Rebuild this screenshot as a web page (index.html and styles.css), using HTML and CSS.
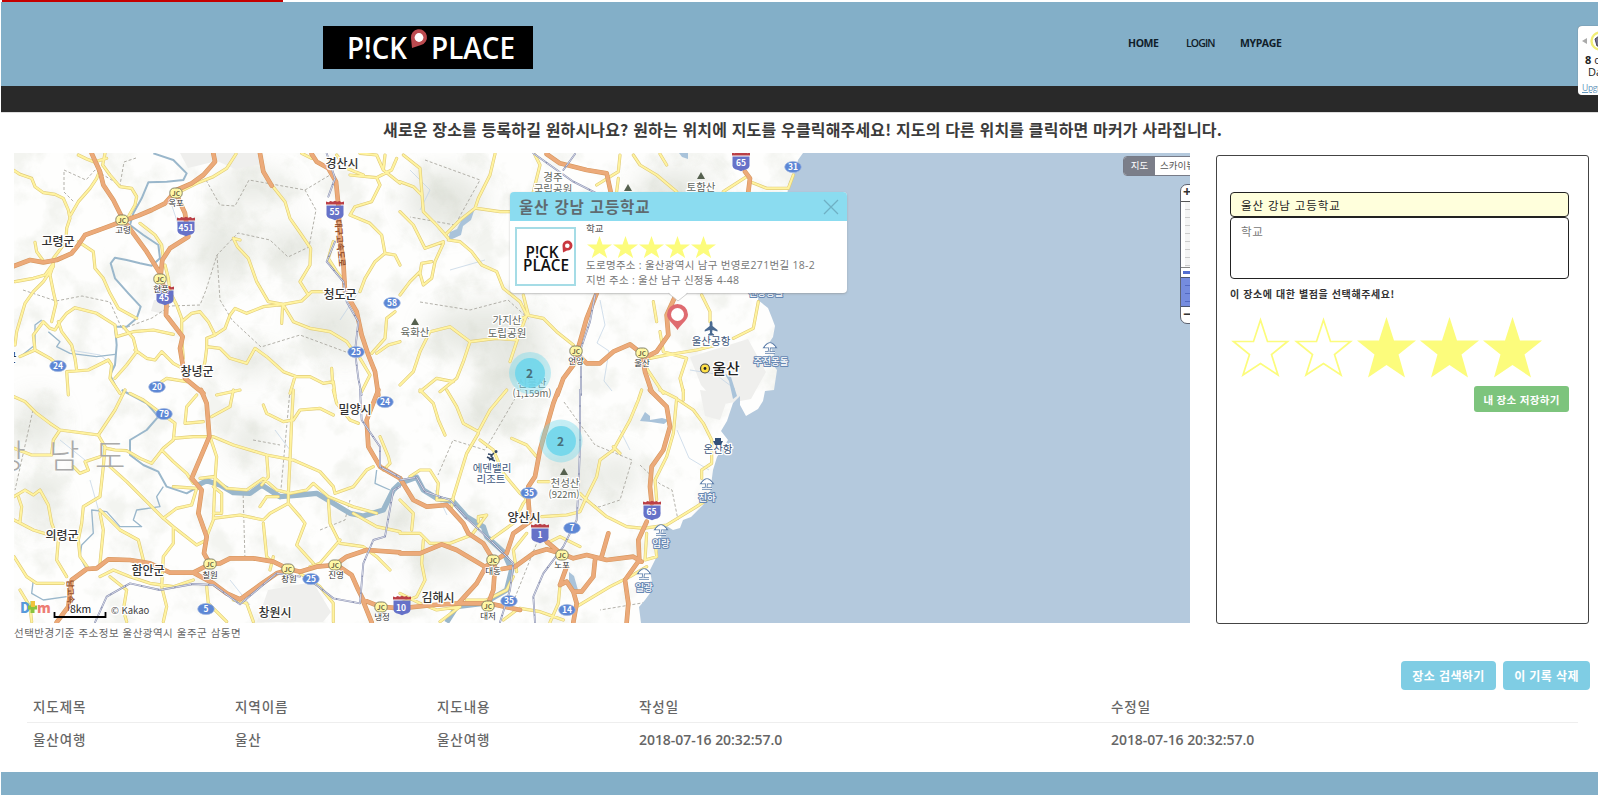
FILE: index.html
```html
<!DOCTYPE html>
<html lang="ko">
<head>
<meta charset="utf-8">
<title>PICK PLACE</title>
<link rel="stylesheet" href="styles.css">
</head>
<body>
<div class="progress"></div>
<header class="header">
  <svg class="logo" viewBox="0 0 210 43">
    <rect width="210" height="43" fill="#000"/>
    <text x="24" y="32.5" textLength="60" lengthAdjust="spacingAndGlyphs">P!CK</text>
    <text x="108" y="32.5" textLength="84" lengthAdjust="spacingAndGlyphs">PLACE</text>
    <path d="M89 22 L88 12 A8 8 0 1 1 98 19 Z" fill="#bb4a4f"/>
    <circle cx="96" cy="11.5" r="4.4" fill="#fff"/>
  </svg>
  <nav class="nav"><a>HOME</a><a class="nav-login">LOGIN</a><a>MYPAGE</a></nav>
</header>
<div class="subbar"></div>
<aside class="widget">
  <div class="widget-top"><span class="widget-arrow"></span><svg class="widget-icon" width="24" height="20" viewBox="0 0 24 20"><circle cx="10" cy="10" r="8.500" fill="#fff" stroke="#f1ee76" stroke-width="2.4"/><path d="M5 8l4-3v7l3 3H7z" fill="#77758f" stroke="#45435b"/></svg></div>
  <div class="widget-count"><b>8</b> online</div>
  <div class="widget-day">Day</div>
  <a class="widget-link">Upgrade</a>
</aside>
<h1 class="notice">새로운 장소를 등록하길 원하시나요? 원하는 위치에 지도를 우클릭해주세요! 지도의 다른 위치를 클릭하면 마커가 사라집니다.</h1>
<main class="content">
  <section class="map">
    <svg class="map-canvas" viewBox="14 153 1176 470">
      <defs>
        <filter id="soft" x="-40%" y="-40%" width="180%" height="180%"><feGaussianBlur stdDeviation="13"/></filter>
        <filter id="relief" x="0" y="0" width="100%" height="100%"><feTurbulence type="fractalNoise" baseFrequency=".03" numOctaves="5" seed="8"/><feColorMatrix values="0 0 0 0 .62  0 0 0 0 .65  0 0 0 0 .56  0 4 0 0 -1.9"/></filter>
        <g id="yellow">
          <g transform="translate(0 145) scale(.33333)">
            <path d="M40 75L60 88 95 100 105 125 130 143 165 148 190 160 205 195 210 220 200 250 198 290 160 340M235 30L260 42 285 52 300 75 290 100 270 130 235 170 212 210M315 25L308 60 330 90 360 125 395 130 410 155 405 180 385 215M285 50L320 40M540 140L590 115 640 95 680 70 708 27M105 292L110 320 128 345M235 290L280 320 285 370 310 400 330 445 355 490 410 520M45 410L100 400 135 390 160 355M160 360L150 390 160 440 168 475 155 530M160 365L130 410 100 440 75 475 50 560 45 600M60 635L105 615 100 570 130 530 150 550 165 555 180 530 200 505 225 488 290 505 345 540 350 575 400 560 460 555 520 568M175 530L185 560 215 600 225 640 230 675M105 615L150 640 175 660M200 680L265 675 325 645 335 660 330 700 360 745M200 680L205 750M370 545L400 580 410 620 380 660 345 700M405 615L440 640 465 645 485 620 520 655 548 670M420 235L465 270 485 300 490 340M495 360L505 400 510 440 530 480 545 520 545 580 550 640M545 530L575 505 600 500 625 530 645 570 675 550 690 510M645 570L620 580 620 610 615 650 605 690M620 605L660 610 690 640 740 655 765 610 800 635 850 680 890 695 930 695 970 715 1000 710 1005 750M995 670L998 715M885 695L870 745M690 510L705 490 740 505 790 485 850 478 905 468 935 440 970 440M848 480L845 535M850 480L880 530 930 550 990 560 1040 590 1065 625M720 285L700 280 712 305 745 340 770 410 805 470 850 478M815 120L855 170 870 220 905 270 932 310 930 360 900 410 925 450M905 25L935 40M1050 90L1130 98 1140 120 1115 170 1065 185 1050 210 1110 235 1145 270 1155 325 1125 350 1095 400 1080 440M1155 325L1185 330 1200 360M1080 25L1130 30 1150 75 1200 115M1130 98L1175 75 1190 40M1155 30L1150 75M1010 30L1040 70 1090 90M1000 290L985 340 1010 380 1035 410M1185 500L1160 520 1155 580 1115 625M1200 590L1165 600 1130 625M650 750L720 735M470 720L500 700 560 710M1080 640L1110 690 1085 740"/>
          </g>
          <g transform="translate(400 145) scale(.33333)">
            <path d="M10 30L60 70 70 200 110 240 145 280M0 200L40 240 75 310 130 290M285 27L270 90 235 160 225 190 180 225 140 265M230 190L300 200 335 200M0 110L40 125 65 150M145 285L180 290 215 320 245 360 290 380 310 430 360 470 380 510 430 520 470 560 520 600M130 295L105 350 95 400 70 420 60 385 65 355 95 350M60 380L30 410 0 450M380 510L350 590 330 650M350 585L290 580 210 590 150 545 90 560 60 620 40 680 0 720M210 590L190 650 170 700 120 740M60 740L110 700 160 710M350 530L385 510 370 450M405 30L420 60 400 140M660 30L655 80 590 120M700 30L720 60 770 90 830 140M780 27L800 60M655 100L650 140M1050 110L1100 130 1165 130 1180 90M970 140L1040 95M905 450L930 500 930 530M1075 470L1060 550 1000 580M750 640L800 630 890 615 950 600M780 560L790 620 860 640 840 700 850 740M760 470L770 530M740 670L790 745"/>
          </g>
          <g transform="translate(0 390) scale(.33333)">
            <path d="M42 20L75 35 110 70 150 100 180 120 295 135 345 60 375 0M180 120L160 150 155 195 95 195 42 175M295 135L315 170 310 230 300 320 250 350 245 400 235 450M300 200L255 215 265 240 240 250 220 230M320 175L345 180 380 182 420 205 455 220 490 175 520 150 525 100 470 60 430 30 390 10M485 180L520 215 560 250 580 280M520 145L580 140 640 140 700 165 800 195 880 210 960 245 1000 290 1005 310M800 195L805 260 785 285M880 0L875 90 870 210 865 310 865 340M790 45L800 70 850 95 880 90 900 60 960 55 1000 75M1000 0L1010 40 1050 90 1075 100M700 0L690 50 635 80M590 15L560 50 555 100 610 95M630 140L650 200 645 270 640 390 620 440M600 265L640 260 680 295 740 300 790 265 830 300 870 310 920 300 940 280 985 320 1060 350 1130 370M1005 310L1060 290 1100 240 1120 230M640 290L665 310 665 370 640 370M520 290L590 295 575 345 530 355 490 385 380 275 330 230M490 385L520 410 520 460 490 500 485 590 500 650 490 695M520 410L590 465 620 450M640 385L720 375 790 390 810 370 865 340M790 400L800 500 810 510M835 320L800 320 780 350M865 340L900 380 915 400 890 465 940 520M985 330L990 400 1020 460 1090 470 1130 500 1170 540M1020 450L960 520 930 530M1060 370L1130 410 1200 425M300 370L310 420 300 520M300 360L360 420 415 450 430 510M42 320L75 300 100 315 120 300 145 345 155 400 175 450 170 510 200 560M55 320L65 350 60 395M42 390L100 420 165 440 235 450 240 500 265 535M42 500L80 560 110 580 190 580M60 600L90 650 95 695M330 560L380 600 370 660 380 695M300 560L340 540 390 560 450 580 520 590 580 570M620 590L625 640 680 695M810 540L820 500M900 550L960 590 1000 640 1000 695M700 630L740 640 760 695M1140 140L1165 200 1170 220 1150 240"/>
          </g>
          <g transform="translate(400 390) scale(.33333)">
            <path d="M60 0L100 40 115 90 135 135M140 0L170 50 190 100 235 125 270 60 320 0M235 130L200 190 160 320 155 350M240 150L280 180 310 250 360 310 385 330M335 145L380 165 410 200M0 430L60 430 90 460 150 460 215 435 260 375 235 380 235 395M0 330L40 370 35 420M160 330L110 330 115 280 90 240 60 240 30 260M70 450L65 520 75 570 50 620 0 640M270 450L340 400 370 340 385 320M425 380L500 375 540 365 560 320 590 260 600 210 640 180 690 90 715 30 725 0M640 170L660 190M540 310L560 330 620 380 680 410 730 415 800 405 890 350 920 330M415 275L460 275M835 30L880 60 910 100 935 150 935 220 905 240 905 265M780 0L830 25 820 130 800 200 765 270 770 330M350 545L340 480 380 430M440 460L480 440 540 470M480 585L475 640 450 697M360 655L420 665 490 690M530 650L580 620 630 590 690 560 740 530M740 430L735 510 770 500 765 450M200 630L260 630 320 600 340 560M0 610L60 640 110 660 180 650M120 695L180 650M310 690L350 660M850 0L850 30"/>
          </g>
        </g>
        <g id="highway">
          <g transform="translate(0 145) scale(.33333)">
            <path d="M275 25L300 80 310 120 340 165 370 225 400 265 440 320 480 385 500 460 498 510 548 575 540 610 555 700 610 745M640 25L645 50 610 90 575 115 530 135 495 175 455 195 415 212 370 228 310 250 255 270 235 300 215 325 170 345 130 352 90 345 42 363M530 150L555 205 565 275 510 310 487 345 482 390M780 25L790 80 815 122M935 27L950 50 985 70 1008 110 1015 180 1020 280 1030 350 1035 440 1070 500 1085 570 1105 630 1125 680 1135 750"/>
          </g>
          <g transform="translate(400 145) scale(.33333)">
            <path d="M440 27L480 55 560 75 620 85 632 140M1035 80L1050 100 1045 140M590 445L560 520 540 590 520 660 490 700 472 750M525 620L560 655 600 655 640 620 690 598 725 625 735 680 755 740M825 455L800 510 805 570 770 620 730 640"/>
          </g>
          <g transform="translate(0 390) scale(.33333)">
            <path d="M603 0L620 40 628 140 575 265 605 300 595 370 620 440 612 490 630 522M170 697L205 650 215 570 260 537 290 535 325 508 390 510 450 520 510 548 580 548 630 522 660 520 690 505 760 505 820 515 865 537 900 545 950 530 1005 525 1040 500 1100 480 1200 487M580 548L640 580 680 610 720 628 780 585 830 550 865 540M1010 525L1055 555 1075 600 1090 630 1140 650 1200 655M1090 635L1115 697M1135 0L1100 90 1105 170 1140 230 1200 265"/>
          </g>
          <g transform="translate(400 390) scale(.33333)">
            <path d="M0 265L40 330 80 350 140 345 190 400 205 430 250 460 280 510M0 490L60 490 125 463 170 480 255 530 280 515 320 490 340 430 390 395 385 330 385 290 405 260 420 180 440 110 460 40 475 0M255 535L230 580 175 640 100 645 0 655M285 530L280 600 265 640 360 660M175 640L265 640M305 537L345 530 400 490 440 478 488 492 520 505 560 495 620 510 700 500 725 515M440 455L488 495M625 430L605 500M585 510L580 560 545 605 520 605 500 575M500 530L480 585M480 585L500 575M520 605L530 640 520 697M750 0L800 50 810 110 790 180 755 230 750 290 755 340M740 395L715 450 718 510 675 570 685 640 680 697"/>
          </g>
        </g>
        <g id="rail">
          <path transform="translate(0 145) scale(.33333)" d="M980 25L1005 100 985 155M1005 290L980 350 1030 410 1040 470 1075 530 1065 620 1075 700 1085 750"/>
          <path transform="translate(400 145) scale(.33333)" d="M400 25L520 110 590 145M525 27L490 75M585 450L570 530 543 610 543 750"/>
          <path transform="translate(0 390) scale(.33333)" d="M285 697L320 620 390 580 480 600 580 582 640 585 720 643 830 550 900 560M930 570L1000 625 1080 640 1090 520 1120 450 1155 440 1180 300 1200 290M1080 0L1085 90 1140 170 1140 230 1200 262"/>
          <path transform="translate(400 390) scale(.33333)" d="M540 0L540 170 535 300 530 390 490 470 430 550 400 620 405 697M0 270L50 262 75 305 150 330 200 385 265 445 340 520 330 600 300 697"/>
        </g>
        <g id="shield"><path d="M-8.5-4.500h17v6q1 7-5.500 7.500l-3 1.200-3-1.200q-6.500-.5-5.500-7.500z" fill="#6672c8"/><path d="M-9-5.500v-3l2.500.8 2-1.300 2.300.8L0-9.300l2.200 1 2.300-.7 2 1.200 2.500-.8v3z" fill="#ba3f46"/></g>
        <g id="jc"><rect x="-6.200" y="-5" width="12.400" height="10" rx="4.500" fill="#fff7a5" stroke="#77755b" stroke-width=".9"/><text y="2.500" class="jc">JC</text></g>
        <ellipse id="oval" rx="8.300" ry="5.600" fill="#5d87d5" stroke="#9db4df" stroke-width=".7"/>
        <path id="peak" d="M0-4L4 3H-4Z" fill="#56614f"/>
        <g id="beach" fill="none"><path d="M-5-1Q0-8 5-1ZM0-3L-1 4M-5 4.500H5" stroke="#6282ad" stroke-width="2.600"/><path d="M-5-1Q0-8 5-1ZM0-3L-1 4M-5 4.500H5" stroke="#fff" fill="#fff" stroke-width=".9"/></g>
      </defs>
      <rect x="14" y="153" width="1176" height="470" fill="#fefefd"/>
      <rect x="14" y="153" width="800" height="470" filter="url(#relief)" opacity=".22"/>
      <g class="hills" filter="url(#soft)">
        <ellipse cx="222" cy="250" rx="24" ry="34"/><ellipse cx="254" cy="187" rx="40" ry="15"/><ellipse cx="288" cy="245" rx="28" ry="16"/><ellipse cx="330" cy="318" rx="36" ry="17"/><ellipse cx="345" cy="345" rx="28" ry="12"/><ellipse cx="37" cy="423" rx="22" ry="26"/><ellipse cx="40" cy="506" rx="18" ry="22"/><ellipse cx="485" cy="330" rx="60" ry="26"/><ellipse cx="515" cy="366" rx="32" ry="34"/><ellipse cx="488" cy="415" rx="38" ry="15"/><ellipse cx="445" cy="200" rx="40" ry="30"/><ellipse cx="570" cy="475" rx="22" ry="38"/><ellipse cx="618" cy="475" rx="20" ry="20"/><ellipse cx="250" cy="440" rx="20" ry="20"/><ellipse cx="440" cy="560" rx="30" ry="15"/><ellipse cx="250" cy="360" rx="26" ry="14"/><ellipse cx="390" cy="520" rx="20" ry="20"/><ellipse cx="675" cy="190" rx="40" ry="22"/>
      </g>
      <g fill="#efefed"><path d="M180 153h82v11l-27 5-18-8-29 7zM154 300h16l-3 15-16-4zM268 590l45-8 18 30-8 10h-66zM690 357l58-18 18 33-15 27-32 6-18-20zM700 390l29 4-9 26-15-4z"/></g>
      <g class="boundary">
        <path d="M64 172L64 192 74 202M64 170L86 180 95 170 120 185 124 162 136 158M23 290L56 301 82 296 110 302 122 329 152 318 170 306 200 305 206 290 217 255 238 233 270 240 288 257 309 247 316 210 305 190M217 255L220 300 232 320 261 347 300 335 346 352M206 180L220 205 235 206 249 180 305 190 330 175M425 160L480 180 455 225 410 217M420 302L470 310 508 300 530 320M523 385L485 450 453 440 438 475M564 402L595 445 632 460 620 500 599 507 570 495M640 465L660 484 672 490 678 520M540 535L510 610M243 490L245 560M290 390L280 500M253 440L280 445M33 410L15 490M320 530L345 520 350 500M660 600L600 610"/>
      </g>
      <g class="streams"><path d="M410 170l20 20-10 20M600 300l5 25-8 18 12 8-5 30 8 10M70 350l30 5 15 12M620 430l10 20M275 430l15 20M90 480l10 35M170 200l10 30M230 580l20 25M60 440l25 20M435 490l12 25M360 290l-20 30M450 270l35-10M530 270l12-15M690 370l25 4 20 15M677 430l12 28 20 12"/></g>
      <path d="M803 153L798 160 794 174 789 182 782 230 762 270 758 300 768 308 772 318 775 326 773 337 769 343 774 355 771 362 777 370 774 390 765 391 763 401 758 409 746 416 740 405 740 396 733 403 727 421 721 431 728 440 717 457 713 470 710 493 703 505 691 517 683 520 680 528 673 530 665 525 660 540 656 558 650 570 653 589 645 600 639 607 641 623H1190V153Z" fill="#b4c9dd"/>
      <path d="M475 208L471 220 463 226 461 235 448 241 450 232 457 229 461 221ZM679 153h9v6l-6-2zM640 421l5-9 5 4v4l12-2 7 2-5 4-13-2zM569 572l5 4 4 14-6 4-3-8zM724 373l7 4 6 19-4 3-4-18z" fill="#a9c3da"/>
      <g class="river">
        <path transform="translate(0 145) scale(.33333)" d="M460 25L520 45 560 85 550 105 500 110 445 112 425 160 400 205 390 240 430 270 475 300 480 340 455 362 420 355 380 345 345 338 332 355 345 400 385 445 422 485 410 520 380 545 345 545 350 600 345 660 330 690 355 740"/>
        <path transform="translate(0 145) scale(.33333)" class="thin" d="M145 560L180 590 170 605 210 625 290 635 345 628M60 635L105 600 105 540 125 525"/>
        <path transform="translate(0 390) scale(.33333)" d="M365 0L440 40 475 80 440 120 390 150 390 195 430 225 475 245 500 290 560 310 595 290"/>
        <path transform="translate(0 390) scale(.33333)" class="wide" d="M595 285L620 272 660 285 700 308 750 310 785 285 840 320 900 315 950 310 1000 340 1050 370 1090 378 1150 360 1180 300 1200 280"/>
        <path transform="translate(0 390) scale(.33333)" class="thin" d="M490 290L470 320 480 350 410 360 400 390 425 410 360 410 320 365 275 360 280 430 245 465 240 500 255 530M1130 240L1125 280 1170 300M100 570L95 610 130 630 200 620"/>
        <path transform="translate(400 390) scale(.33333)" class="wide" d="M0 280L50 262 70 300 110 325 160 335 200 380 250 410 260 440 310 485 335 540 320 600 250 640 170 650 140 697"/>
      </g>
      <use href="#yellow" class="road yellow-edge"/><use href="#yellow" class="road yellow-fill"/>
      <use href="#highway" class="road highway-edge"/><use href="#highway" class="road highway-fill"/>
      <use href="#rail" class="road rail-edge"/><use href="#rail" class="road rail-fill"/>

      <g class="province"><text x="-5" y="468">상</text><text x="49" y="468">남</text><text x="95" y="468">도</text></g>
      <g class="city">
        <text x="342" y="168">경산시</text><text x="58" y="246">고령군</text><text x="340" y="299">청도군</text><text x="197" y="376">창녕군</text><text x="355" y="414">밀양시</text><text x="62" y="540">의령군</text><text x="148" y="575">함안군</text><text x="275" y="617">창원시</text><text x="438" y="602">김해시</text><text x="524" y="522">양산시</text><text x="11" y="362">군</text><text x="726" y="374" class="ulsan">울산</text>
      </g>
      <g class="nature">
        <text x="553" y="181">경주</text><text x="553" y="193">국립공원</text><text x="701" y="191">토함산</text><text x="415" y="336">육화산</text><text x="507" y="324">가지산</text><text x="507" y="337">도립공원</text><text x="532" y="387">신불산</text><text x="532" y="397" class="alt">(1,159m)</text><text x="565" y="487">천성산</text><text x="564" y="498" class="alt">(922m)</text>
      </g>
      <g class="spot"><text x="492" y="472">에덴밸리</text><text x="491" y="483">리조트</text><text x="711" y="345">울산공항</text><text x="718" y="453">온산항</text></g>
      <g class="sea"><text x="766" y="296">진창몽돌</text><text x="771" y="365">주전몽돌</text><text x="707" y="501">진하</text><text x="661" y="547">임랑</text><text x="644" y="591">일광</text></g>
      <g class="road-name"><text transform="translate(335 220) rotate(85)">대구고속도로</text><text transform="translate(67 580) rotate(88)">남고속도</text></g>
      <use href="#peak" x="415" y="322"/><use href="#peak" x="628" y="188"/><use href="#peak" x="701" y="176"/><use href="#peak" x="564" y="472"/>
      <use href="#beach" x="770" y="348"/><use href="#beach" x="707" y="484"/><use href="#beach" x="661" y="530"/><use href="#beach" x="644" y="574"/>
      <path d="M711 321q1.500 0 1.500 3v2l5 4v1.500l-5-1.500-.4 3 2 1.500v1h-6v-1l2-1.500-.4-3-5 1.500v-1.500l5-4v-2q0-3 1.300-3z" fill="#4a6a91"/>
      <path d="M718 436v2M715 438h6v3h2l-2 4h-6l-2-4h2z" fill="#335179"/>
      <g fill="none" stroke="#334766" stroke-width="1.500"><circle cx="496" cy="451.500" r=".8"/><path d="M494 453l-3 3 2 2-4 2M488 454l5 1M487 457l8 4"/></g>
      <g class="route">
        <use href="#shield" x="186" y="226"/><text x="186" y="231">451</text>
        <use href="#shield" x="335" y="210"/><text x="334.500" y="215">55</text>
        <use href="#shield" x="165" y="295"/><text x="164" y="301">45</text>
        <use href="#shield" x="741" y="161"/><text x="741" y="166">65</text>
        <use href="#shield" x="652" y="510"/><text x="651.500" y="515">65</text>
        <use href="#shield" x="540" y="533"/><text x="540" y="538">1</text>
        <use href="#shield" x="402" y="605"/><text x="401" y="611">10</text>
        <use href="#oval" x="58" y="366"/><text x="58" y="369">24</text>
        <use href="#oval" x="157" y="387"/><text x="157" y="390">20</text>
        <use href="#oval" x="164" y="414"/><text x="164" y="417">79</text>
        <use href="#oval" x="356" y="352"/><text x="356" y="355">25</text>
        <use href="#oval" x="392" y="303"/><text x="392" y="306">58</text>
        <use href="#oval" x="385" y="402"/><text x="385" y="405">24</text>
        <use href="#oval" x="793" y="167"/><text x="793" y="170">31</text>
        <use href="#oval" x="529" y="493"/><text x="529" y="496">35</text>
        <use href="#oval" x="572" y="528"/><text x="572" y="531">7</text>
        <use href="#oval" x="509" y="601"/><text x="509" y="604">35</text>
        <use href="#oval" x="567" y="610"/><text x="567" y="613">14</text>
        <use href="#oval" x="311" y="579"/><text x="311" y="582">25</text>
        <use href="#oval" x="206" y="609"/><text x="206" y="612">5</text>
      </g>
      <use href="#jc" x="176" y="193"/><use href="#jc" x="122" y="220"/><use href="#jc" x="160" y="279"/><use href="#jc" x="576" y="351"/><use href="#jc" x="642" y="353"/><use href="#jc" x="210" y="564"/><use href="#jc" x="288" y="569"/><use href="#jc" x="335" y="565"/><use href="#jc" x="381" y="607"/><use href="#jc" x="493" y="560"/><use href="#jc" x="488" y="606"/><use href="#jc" x="562" y="555"/>
      <g class="place">
        <text x="176" y="206">옥포</text><text x="123" y="233">고령</text><text x="161" y="292">현풍</text><text x="576" y="364">언양</text><text x="642" y="366">울산</text><text x="210" y="578">칠원</text><text x="289" y="582">창원</text><text x="336" y="578">진영</text><text x="382" y="620">냉정</text><text x="493" y="574">대동</text><text x="488" y="619">대저</text><text x="562" y="568">노포</text>
      </g>
      <circle cx="705" cy="368.500" r="4.500" fill="#ffe047" stroke="#444" stroke-width="1.200"/><circle cx="705" cy="368.500" r="1.400" fill="#222"/>

      <g class="cluster"><circle cx="530" cy="373" r="21" opacity=".4"/><circle cx="530" cy="373" r="15" opacity=".9"/><text x="529.500" y="378">2</text><circle cx="561" cy="441" r="21.500" opacity=".4"/><circle cx="561" cy="441" r="15" opacity=".9"/><text x="560.500" y="446">2</text></g>
      <path d="M677.500 330C673 323 667 320 667 314.500A10.500 10.500 0 1 1 688 314.500C688 320 682 323 677.500 330Z" fill="#df6b70"/><circle cx="677.500" cy="314.500" r="6.500" fill="#fff"/>

      <g class="daum"><text x="20" y="613" fill="#579adb">D</text><path d="M32.500 601v12M28 607.500h9" stroke="#8ac43e" stroke-width="4"/><path d="M33 601v6" stroke="#f0c43c" stroke-width="4"/><text x="37" y="613" fill="#ed7d74">m</text></g>
      <path d="M54.500 612v5h51v-5" fill="none" stroke="#000" stroke-width="1.800"/>
      <text x="70" y="613" class="scale">8km</text><text x="111" y="613.500" class="copyright">© Kakao</text>
    </svg>
    <div class="map-type"><span class="map-type-on">지도</span><span class="map-type-off">스카이뷰</span></div>
    <div class="zoom"><span class="zoom-btn">+</span><span class="zoom-track"></span><span class="zoom-handle"></span><span class="zoom-fill"></span><span class="zoom-btn">−</span></div>
    <article class="popup">
      <div class="popup-title"><span>울산 강남 고등학교</span><svg width="16" height="16" viewBox="0 0 16 16"><path d="M1 1l14 14M15 1L1 15" stroke="#6fb0c4" stroke-width="1.300"/></svg></div>
      <div class="popup-body">
        <svg class="thumb" viewBox="0 0 61 59"><rect x="1" y="1" width="59" height="57" fill="#fff" stroke="#a5dce6" stroke-width="2"/><text x="10.500" y="30.500" textLength="33" lengthAdjust="spacingAndGlyphs">P!CK</text><text x="8" y="43.500" textLength="46" lengthAdjust="spacingAndGlyphs">PLACE</text><path d="M48 25.500L47.500 19A5 5 0 1 1 52 23.500Z" fill="#c9373f"/><circle cx="52.300" cy="18.800" r="2.300" fill="#fff"/></svg>
        <div class="popup-info">
          <div class="popup-kind">학교</div>
          <svg class="popup-stars" width="130" height="22" viewBox="0 0 130 22"><defs><path id="star" d="M12.500 0L15.500 8.500 25 8.500 17.500 14 20.200 22 12.500 17 4.800 22 7.500 14 0 8.500 9.500 8.500Z" fill="#fcfc7c"/></defs><use href="#star"/><use href="#star" x="26"/><use href="#star" x="52"/><use href="#star" x="78"/><use href="#star" x="104"/></svg>
          <div class="popup-road">도로명주소 : 울산광역시 남구 번영로271번길 18-2</div>
          <div class="popup-lot">지번 주소 : 울산 남구 신정동 4-48</div>
        </div>
      </div>
      <svg class="popup-tail" width="20" height="10" viewBox="0 0 20 10"><path d="M0 0h20L10 9Z" fill="#fff"/><path d="M0 1L10 9 20 1" fill="none" stroke="#c4c4c4" stroke-width=".8"/></svg>
    </article>
  </section>
  <form class="panel">
    <div class="field field-name">울산 강남 고등학교</div>
    <div class="field field-desc">학교</div>
    <div class="panel-label">이 장소에 대한 별점을 선택해주세요!</div>
    <svg class="rating" width="312" height="61" viewBox="0 0 312 61">
      <g fill="none" stroke="#fcfc7c" stroke-width="1.700"><path d="M29.500 3L36.500 24.500H56.500L40.500 37.500 47 58 29.500 46.500 12 58 18.500 37.500 2.500 24.500H22.500Z"/><path transform="translate(63)" d="M29.500 3L36.500 24.500H56.500L40.500 37.500 47 58 29.500 46.500 12 58 18.500 37.500 2.500 24.500H22.500Z"/></g>
      <g fill="#fcfc7c"><path transform="translate(126)" d="M29.500 0L37 23.500H59L41.500 37.500 48 60.500 29.500 48 11 60.500 17.500 37.500 0 23.500H22Z"/><path transform="translate(189)" d="M29.500 0L37 23.500H59L41.500 37.500 48 60.500 29.500 48 11 60.500 17.500 37.500 0 23.500H22Z"/><path transform="translate(252)" d="M29.500 0L37 23.500H59L41.500 37.500 48 60.500 29.500 48 11 60.500 17.500 37.500 0 23.500H22Z"/></g>
    </svg>
    <button class="save" type="button">내 장소 저장하기</button>
  </form>
</main>
<p class="address">선택반경기준 주소정보 울산광역시 울주군 삼동면</p>
<div class="actions"><button class="action action-search" type="button">장소 검색하기</button><button class="action action-delete" type="button">이 기록 삭제</button></div>
<div class="records">
  <div class="record record-head"><span>지도제목</span><span>지역이름</span><span>지도내용</span><span>작성일</span><span>수정일</span></div>
  <div class="record"><span>울산여행</span><span>울산</span><span>울산여행</span><span class="date">2018-07-16 20:32:57.0</span><span class="date">2018-07-16 20:32:57.0</span></div>
</div>
<footer class="footer"></footer>
</body>
</html>
```
FILE: styles.css
```css
* { box-sizing: border-box; }
html { overflow: hidden; }
body { margin: 0; padding-left: 1px; height: 795px; overflow: hidden; position: relative; display: flex; flex-direction: column; background: #fff; color: #666; font-family: "Open Sans", "Noto Sans CJK KR", sans-serif; }
button { border: 0; font-family: inherit; color: #fff; }

.progress { flex: none; width: 281px; height: 2px; margin-left: 1px; background: #c40000; }
.header { flex: none; height: 84px; background: #83afc8; display: flex; padding: 24px 0 0 321.5px; }
.logo { width: 210px; height: 43px; }
.logo text { font: 600 31px "Open Sans", sans-serif; fill: #fff; }
.nav { display: flex; margin-left: 595.5px; padding-top: 9px; font-size: 10.5px; line-height: 16px; font-weight: 700; color: #10202a; }
.nav a { width: 58px; letter-spacing: -.4px; }
.nav .nav-login { width: 54px; font-weight: 600; letter-spacing: -.9px; }
.subbar { flex: none; height: 27px; background: #292929; border-bottom: 1px solid #ddd; }

.widget { position: absolute; left: 1578px; top: 26px; width: 20px; height: 69px; padding: 6px 0 0 4px; background: #fff; border-radius: 4px 0 0 4px; overflow: hidden; white-space: nowrap; color: #222; font: 11px/12px "Open Sans", sans-serif; box-shadow: 0 0 1px #555; }
.widget-top { display: flex; align-items: center; gap: 3px; height: 18px; }
.widget-icon { flex: none; }
.widget-arrow { flex: none; border: 3px solid transparent; border-right: 5px solid #aaa; border-left: 0; }
.widget-count { margin: 4px 0 0 3px; }
.widget-day { padding-left: 6px; }
.widget-link { display: block; margin-top: 4px; font-size: 8.5px; letter-spacing: -.3px; text-decoration: underline; color: #6598bd; }

.notice { flex: none; margin: 4px 0 0 382px; height: 24px; font-size: 16px; line-height: 24px; font-weight: 700; letter-spacing: .16px; color: #3b3b3b; white-space: nowrap; font-family: "Noto Sans CJK KR", sans-serif; }
.content { flex: none; display: flex; height: 472px; margin: 12px 0 0 13px; gap: 26px; }
.map { position: relative; width: 1176px; height: 470px; overflow: hidden; flex: none; }
.map-canvas { display: block; width: 1176px; height: 470px; }

.hills { fill: #a3aa96; opacity: .26; }
.boundary { fill: none; stroke: #aaa8a0; stroke-width: .9; stroke-dasharray: 3 2; }
.streams { fill: none; stroke: #bed1e4; stroke-width: .7; }
.river { fill: none; stroke: #9ab7cb; stroke-width: 6; stroke-linejoin: round; }
.river .thin { stroke-width: 4; }
.river .wide { stroke-width: 16; }
.road { fill: none; stroke-linejoin: round; stroke-linecap: round; }
.yellow-edge { stroke: #e0cb78; stroke-width: 9.5; }
.yellow-fill { stroke: #fff3a0; stroke-width: 6; }
.highway-edge { stroke: #d6975e; stroke-width: 14; }
.highway-fill { stroke: #ecaa7a; stroke-width: 10.5; }
.rail-edge { stroke: #858cae; stroke-width: 5.5; }
.rail-fill { stroke: #e5e7f0; stroke-width: 2.5; stroke-dasharray: 45 6; }

.map-canvas text { font-family: "Noto Sans CJK KR", sans-serif; }
.city text, .place text, .nature text, .spot text, .sea text, .cluster text, .jc { text-anchor: middle; }
.city, .place, .nature, .spot, .sea, .scale, .copyright { paint-order: stroke; stroke: #fff; stroke-width: 2.5px; stroke-linejoin: round; }
.city { font-size: 12px; font-weight: 500; fill: #333; }
.city .ulsan { font-size: 15px; font-weight: 500; fill: #222; }
.place { font-size: 8.5px; fill: #333; stroke-width: 1.5px; }
.nature { font-size: 10.5px; fill: #626760; }
.nature .alt { font-size: 9.5px; }
.spot { font-size: 10.5px; fill: #40577b; }
.sea { font-size: 9.5px; font-weight: 500; fill: #fff; stroke: #6788b3; stroke-width: 2px; }
.province { font-size: 33px; font-weight: 300; fill: #aaa; }
.road-name { font-size: 8.5px; font-weight: 700; fill: #96512e; }
.route { font-size: 8.5px; font-weight: 700; fill: #fff; text-anchor: middle; }
.jc { font-size: 6.5px; font-weight: 700; fill: #666345; }
.cluster { fill: #70d6eb; }
.cluster text { font-size: 12px; font-weight: 700; fill: #48707b; }
.daum { font-size: 14px; font-weight: 900; }
.scale { font-size: 10.5px; fill: #222; }
.copyright { font-size: 9.5px; fill: #444; }

.map-type { position: absolute; left: 1109px; top: 3px; width: 80px; height: 20px; display: flex; border: 1px solid #777b87; border-radius: 4px 0 0 4px; background: #fff; overflow: hidden; font-size: 9.5px; line-height: 18px; white-space: nowrap; }
.map-type-on { width: 31px; flex: none; text-align: center; background: #7b7e89; color: #fff; }
.map-type-off { padding-left: 5px; color: #555; }
.zoom { position: absolute; left: 1166px; top: 31px; width: 20px; height: 140px; display: flex; flex-direction: column; border: 1px solid #5e6370; border-radius: 7px 0 0 7px; background: #fff; overflow: hidden; }
.zoom-btn { height: 16px; line-height: 14px; padding-left: 2px; font-size: 14px; font-weight: 700; color: #333; }
.zoom-track { height: 68px; border-top: 1px solid #555; border-bottom: 1px solid #888; background: linear-gradient(90deg, #fff 4px, transparent 4px), repeating-linear-gradient(#f5f5f5 0 7px, #ccc 7px 8px); }
.zoom-handle { height: 9px; margin-left: 2px; border: solid #fff; border-width: 3px 0; background: #526dd0; }
.zoom-fill { height: 31px; border: solid #4b5571; border-width: 1px 0; background: linear-gradient(90deg, #758cdf 4px, transparent 4px), repeating-linear-gradient(#758cdf 0 7px, #5269c2 7px 8px); }

.popup { position: absolute; left: 496px; top: 39px; width: 337px; height: 101px; border-radius: 4px; background: #fff; box-shadow: 0 1px 2px #8888; }
.popup-title { height: 29px; padding: 0 8px 0 9px; display: flex; align-items: center; justify-content: space-between; border-radius: 4px 4px 0 0; background: #8bdcf0; color: #5f6b70; font-size: 15.5px; line-height: 29px; font-weight: 700; letter-spacing: .85px; font-family: "Noto Sans CJK KR", sans-serif; }
.popup-body { display: flex; gap: 10px; padding: 6px 0 0 5px; }
.thumb { width: 61px; height: 59px; }
.thumb text { font: 600 16px "Open Sans", sans-serif; fill: #111; }
.popup-info { font-size: 10.5px; line-height: 15px; white-space: nowrap; letter-spacing: .3px; color: #777; margin-top: -6px; }
.popup-kind { font-size: 9.5px; color: #555; letter-spacing: 0; }
.popup-stars { display: block; margin: 0 0 0 1px; }
.popup-tail { position: absolute; left: 158px; top: 100px; }

.panel { width: 373px; height: 469px; margin-top: 2px; padding: 36px 19px 0 13px; border: 1px solid #444; border-radius: 3px; display: flex; flex-direction: column; font-family: "Noto Sans CJK KR", sans-serif; }
.field { border: 1px solid #222; border-radius: 4px; padding-left: 10px; font-size: 11.5px; letter-spacing: .6px; }
.field-name { height: 25px; line-height: 25px; background: #ffffdc; color: #222; letter-spacing: .85px; }
.field-desc { height: 62px; padding-top: 4px; line-height: 18px; color: #777; }
.panel-label { margin-top: 6px; font-size: 10px; line-height: 17px; font-weight: 700; letter-spacing: .6px; color: #333; }
.rating { display: block; margin: 15px 0 8px 1px; }
.save { align-self: flex-end; width: 95px; height: 26px; padding: 0; border-radius: 3px; background: #7dc47d; font-size: 10.5px; font-weight: 700; letter-spacing: .3px; }

.address { flex: none; margin: 0 0 0 13px; font: 10.5px/16px "Noto Sans CJK KR", sans-serif; letter-spacing: .5px; }
.actions { flex: none; display: flex; justify-content: flex-end; gap: 7px; margin-top: 20px; padding-right: 8px; }
.action { height: 29px; padding: 0; border-radius: 4px; background: #7fcde4; font: 700 12px "Noto Sans CJK KR", sans-serif; letter-spacing: .4px; }
.action-search { width: 95px; }
.action-delete { width: 87px; }
.records { flex: none; margin: 0 20px 0 26px; font-family: "Noto Sans CJK KR", sans-serif; }
.record { display: grid; grid-template-columns: 202px 202px 202px 472px 1fr; padding-left: 6px; height: 36px; line-height: 33px; font-size: 13.5px; font-weight: 500; letter-spacing: .9px; }
.record-head { height: 33px; line-height: 32px; border-bottom: 1px solid #eee; }
.date { font-size: 14px; font-weight: 600; font-family: "Open Sans", sans-serif; letter-spacing: -.05px; }
.footer { margin-top: 13px; flex: 1; background: #83afc8; }
```
